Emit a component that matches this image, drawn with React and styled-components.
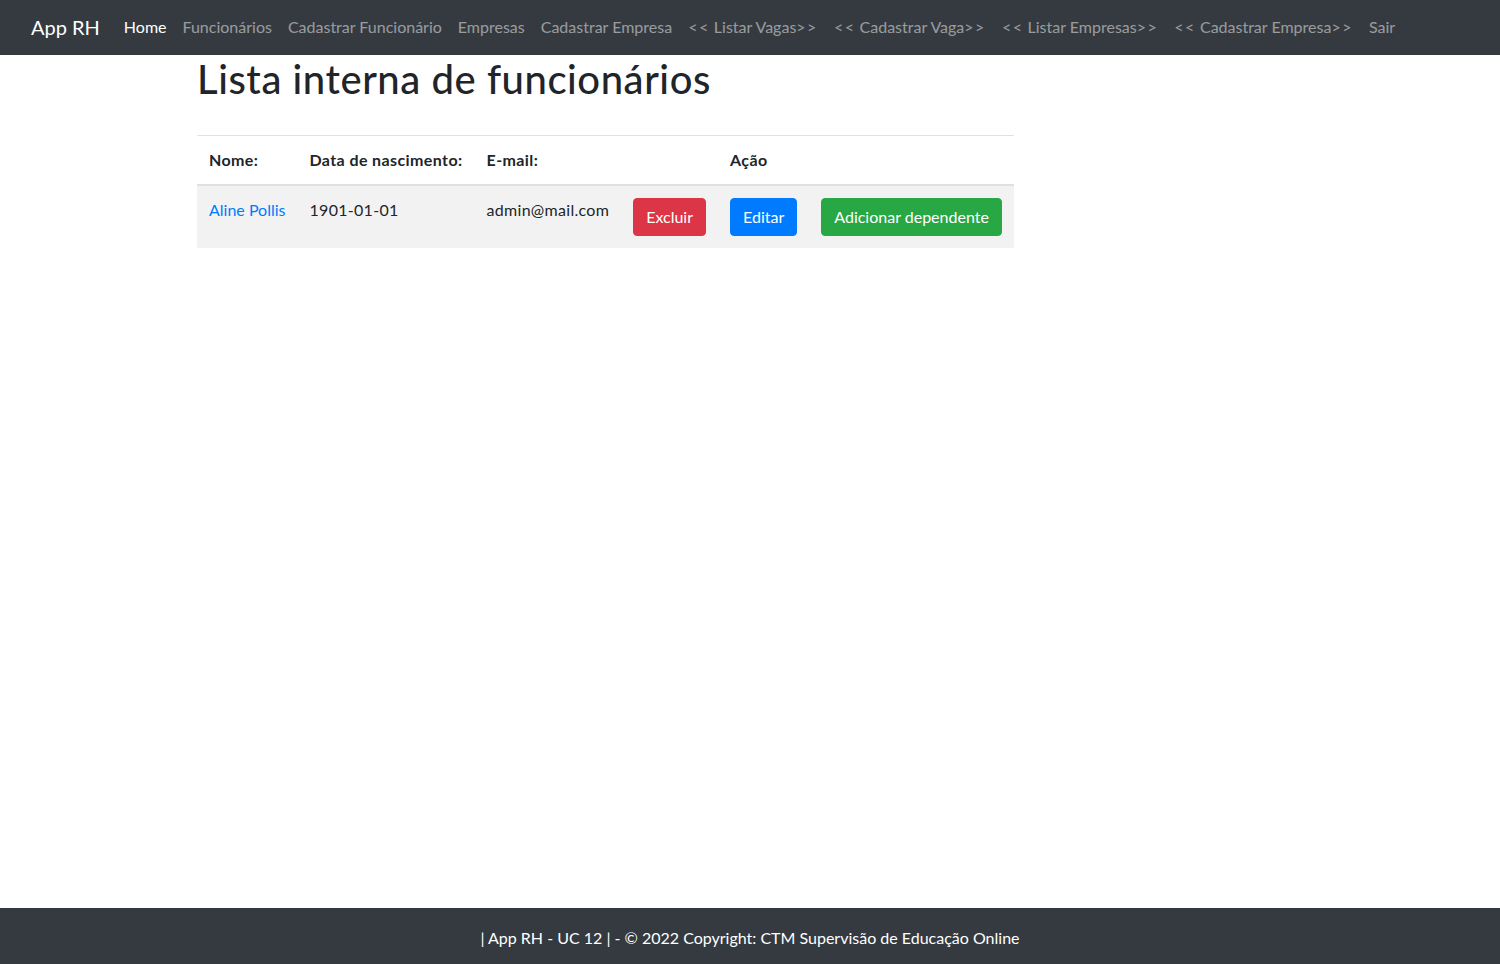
import React from "react";
import styled, { createGlobalStyle } from "styled-components";

const GlobalStyle = createGlobalStyle`
  * { box-sizing: border-box; }
  body {
    margin: 0;
    font-family: "Lato", "Noto Sans", "Liberation Sans", sans-serif;
    font-size: 16px;
    line-height: 1.5;
    color: #212529;
    background: #fff;
  }
`;

const Page = styled.div`
  min-height: 100vh;
  display: flex;
  flex-direction: column;
`;

const Navbar = styled.nav`
  height: 55px;
  background: #343a40;
  display: flex;
  align-items: center;
  padding: 0 31px 1px;
`;

const Brand = styled.a`
  font-size: 20px;
  color: #fff;
  text-decoration: none;
  margin-right: 16px;
  white-space: nowrap;
`;

const NavList = styled.ul`
  display: flex;
  list-style: none;
  margin: 0;
  padding: 0;
`;

const NavLink = styled.a`
  display: block;
  padding: 8px;
  color: ${(p) => (p.$active ? "#fff" : "rgba(255,255,255,.5)")};
  text-decoration: none;
  white-space: nowrap;
`;

const Arrows = styled.span`
  letter-spacing: 1.5px;
`;

const Main = styled.main`
  flex: 1;
  width: 1140px;
  margin: 0 auto;
  padding: 0 15px 0 17px;
`;

const Title = styled.h1`
  margin: 0 0 8px;
  font-size: 40px;
  font-weight: 500;
  line-height: 1.2;
  letter-spacing: 0.55px;
`;

const Spacer = styled.div`
  height: 24px;
`;

const Table = styled.table`
  border-collapse: collapse;
  margin-bottom: 16px;
`;

const Th = styled.th`
  text-align: left;
  padding: 12px;
  vertical-align: bottom;
  border-top: 1px solid #dee2e6;
  border-bottom: 2px solid #dee2e6;
  font-weight: 700;
  white-space: nowrap;
  letter-spacing: 0.4px;
`;

const Row = styled.tr`
  background: rgba(0, 0, 0, 0.05);
`;

const Td = styled.td`
  padding: 12px;
  vertical-align: top;
  border-top: 1px solid #dee2e6;
  white-space: nowrap;
  letter-spacing: 0.3px;
`;

const NameLink = styled.a`
  color: #007bff;
  text-decoration: none;
  letter-spacing: 0;
`;

const colors = {
  danger: "#dc3545",
  primary: "#007bff",
  success: "#28a745",
};

const Button = styled.button`
  font-family: inherit;
  font-size: 16px;
  line-height: 1.5;
  padding: 6px 12px;
  border: 1px solid ${(p) => colors[p.$variant]};
  background: ${(p) => colors[p.$variant]};
  color: #fff;
  border-radius: 4px;
  cursor: pointer;
  white-space: nowrap;
  letter-spacing: 0;
`;

const Footer = styled.footer`
  background: #343a40;
  color: #fff;
  text-align: center;
  padding: 18px 16px 14px;
  height: 56px;
`;

const links = [
  { text: "Funcionários" },
  { text: "Cadastrar Funcionário" },
  { text: "Empresas" },
  { text: "Cadastrar Empresa" },
  { text: "Listar Vagas", arrows: true },
  { text: "Cadastrar Vaga", arrows: true },
  { text: "Listar Empresas", arrows: true },
  { text: "Cadastrar Empresa", arrows: true },
  { text: "Sair" },
];

const App = () => {
  return (
    <Page>
      <GlobalStyle />
      <Navbar>
        <Brand href="#">App RH</Brand>
        <NavList>
          <li>
            <NavLink href="#" $active>
              Home
            </NavLink>
          </li>
          {links.map((l, i) => (
            <li key={i}>
              <NavLink href="#">
                {l.arrows ? (
                  <>
                    <Arrows>{"<<"}</Arrows> {l.text}
                    <Arrows>{">>"}</Arrows>
                  </>
                ) : (
                  l.text
                )}
              </NavLink>
            </li>
          ))}
        </NavList>
      </Navbar>
      <Main>
        <Title>Lista interna de funcionários</Title>
        <Spacer />
        <Table>
          <thead>
            <tr>
              <Th>Nome:</Th>
              <Th>Data de nascimento:</Th>
              <Th>E-mail:</Th>
              <Th />
              <Th>Ação</Th>
              <Th />
            </tr>
          </thead>
          <tbody>
            <Row>
              <Td>
                <NameLink href="#">Aline Pollis</NameLink>
              </Td>
              <Td>1901-01-01</Td>
              <Td>admin@mail.com</Td>
              <Td>
                <Button $variant="danger">Excluir</Button>
              </Td>
              <Td>
                <Button $variant="primary">Editar</Button>
              </Td>
              <Td>
                <Button $variant="success">Adicionar dependente</Button>
              </Td>
            </Row>
          </tbody>
        </Table>
      </Main>
      <Footer>| App RH - UC 12 | - © 2022 Copyright: CTM Supervisão de Educação Online</Footer>
    </Page>
  );
};

export default App;
